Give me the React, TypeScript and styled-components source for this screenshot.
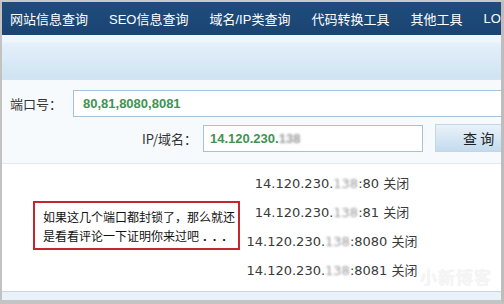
import React from "react";
import styled, { createGlobalStyle } from "styled-components";

const Global = createGlobalStyle`
  html, body { margin: 0; padding: 0; background: #c4c4c4; }
  body { font-family: "Noto Sans CJK SC", "DejaVu Sans", sans-serif; }
`;

const Frame = styled.div`
  position: relative;
  width: 504px;
  height: 304px;
  box-sizing: border-box;
  border-left: 2px solid #c2c2c2;
  border-top: 2px solid #c8c8c8;
  border-right: 3px solid #bdbdbd;
  border-bottom: 4px solid #c4c4c4;
  background: #fff;
  display: flex;
  flex-direction: column;
  overflow: hidden;
`;

const Nav = styled.nav`
  height: 33px;
  flex: none;
  background: linear-gradient(#1f4c7c, #1a4472);
  display: flex;
  align-items: center;
  padding-left: 8px;
  gap: 21px;
  white-space: nowrap;
  overflow: hidden;
`;

const NavItem = styled.span`
  color: #fff;
  font-size: 13px;
  font-family: "Liberation Sans", "Noto Sans CJK SC", sans-serif;
`;

const Band = styled.div`
  flex: none;
  height: 43px;
  border-top: 1px solid #f4f8fc;
  background: linear-gradient(#eef5fb 0, #eef5fb 6px, #e4f0fa 7px, #cfe3f2 100%);
  border-bottom: 1px solid #d6e4ef;
`;

const Form = styled.div`
  flex: none;
  background: #f7fafd;
  padding: 10px 0 11px;
  display: flex;
  flex-direction: column;
  gap: 7px;
  border-bottom: 1px solid #e2e8ee;
`;

const Row = styled.div`
  display: flex;
  align-items: center;
`;

const Label = styled.label<{ $w: number; $right?: boolean }>`
  width: ${(p) => p.$w}px;
  flex: none;
  box-sizing: border-box;
  text-align: ${(p) => (p.$right ? "right" : "left")};
  padding-left: ${(p) => (p.$right ? 0 : 8)}px;
  font-size: 13px;
  color: #333;
  font-family: "Noto Sans CJK SC", sans-serif;
`;

const Field = styled.div<{ $w: number; $pad: number; $gap?: number }>`
  width: ${(p) => p.$w}px;
  margin-left: ${(p) => p.$gap ?? 0}px;
  flex: none;
  height: 27px;
  box-sizing: border-box;
  border: 1px solid #a9c1d6;
  background: #fff;
  display: flex;
  align-items: center;
  padding-left: ${(p) => p.$pad}px;
  font-family: "Liberation Sans", sans-serif;
  font-weight: bold;
  font-size: 13px;
  color: #409352;
  white-space: nowrap;
`;

const Button = styled.button`
  flex: none;
  width: 80px;
  height: 28px;
  margin-left: 12px;
  border: 1px solid #c4d6e4;
  border-right: none;
  background: linear-gradient(#e9f2f9, #c3dbee);
  font-family: "Noto Sans CJK SC", sans-serif;
  font-size: 14px;
  color: #222;
  text-align: left;
  padding: 0 0 0 27px;
  white-space: pre;
`;

const Results = styled.div`
  flex: 1;
  display: flex;
  flex-direction: column;
  align-items: center;
  padding: 10px 0 0 161px;
  gap: 9px;
`;

const Line = styled.div`
  font-family: "DejaVu Sans", "Noto Sans CJK SC", sans-serif;
  font-size: 13px;
  color: #3a3a3a;
  line-height: 20px;
  white-space: nowrap;
`;

const Blur = styled.span`
  color: #9a9a9a;
  filter: blur(1px);
`;

const Footer = styled.div`
  flex: none;
  height: 8px;
  border-top: 1px solid #c9d5e0;
  background: #e9f1f9;
`;

const Note = styled.div`
  position: absolute;
  left: 31px;
  top: 199px;
  width: 207px;
  height: 49px;
  box-sizing: border-box;
  border: 2px solid #c3262c;
  padding: 4px 0 0 8px;
  font-family: "Noto Sans CJK SC", sans-serif;
  font-size: 12px;
  line-height: 19px;
  color: #111;
  background: #fff;
  white-space: nowrap;
`;

const Dots = styled.span`
  font-family: "Liberation Sans", sans-serif;
  font-weight: bold;
  font-size: 13px;
  letter-spacing: 6px;
  margin-left: 4px;
`;

const Watermark = styled.div`
  position: absolute;
  left: 418px;
  top: 262px;
  font-family: "Noto Sans CJK SC", sans-serif;
  font-weight: bold;
  font-size: 17px;
  letter-spacing: 1px;
  color: #f5f5f5;
  text-shadow: 0 0 1px #ececec;
`;

const ports = ["80", "81", "8080", "8081"];

export default function App() {
  return (
    <>
      <Global />
      <Frame>
        <Nav>
          <NavItem>网站信息查询</NavItem>
          <NavItem>SEO信息查询</NavItem>
          <NavItem>域名/IP类查询</NavItem>
          <NavItem>代码转换工具</NavItem>
          <NavItem>其他工具</NavItem>
          <NavItem>LOG</NavItem>
        </Nav>
        <Band />
        <Form>
          <Row>
            <Label $w={71}>端口号：</Label>
            <Field $w={440} $pad={9}>80,81,8080,8081</Field>
          </Row>
          <Row>
            <Label $w={195} $right>IP/域名：</Label>
            <Field $w={220} $pad={6} $gap={6}>
              14.120.230.<Blur>138</Blur>
            </Field>
            <Button>{"查 询"}</Button>
          </Row>
        </Form>
        <Results>
          {ports.map((p) => (
            <Line key={p}>
              14.120.230.<Blur>138</Blur>:{p} 关闭
            </Line>
          ))}
        </Results>
        <Footer />
        <Note>
          如果这几个端口都封锁了，那么就还
          <br />
          是看看评论一下证明你来过吧<Dots>...</Dots>
        </Note>
        <Watermark>小新博客</Watermark>
      </Frame>
    </>
  );
}
